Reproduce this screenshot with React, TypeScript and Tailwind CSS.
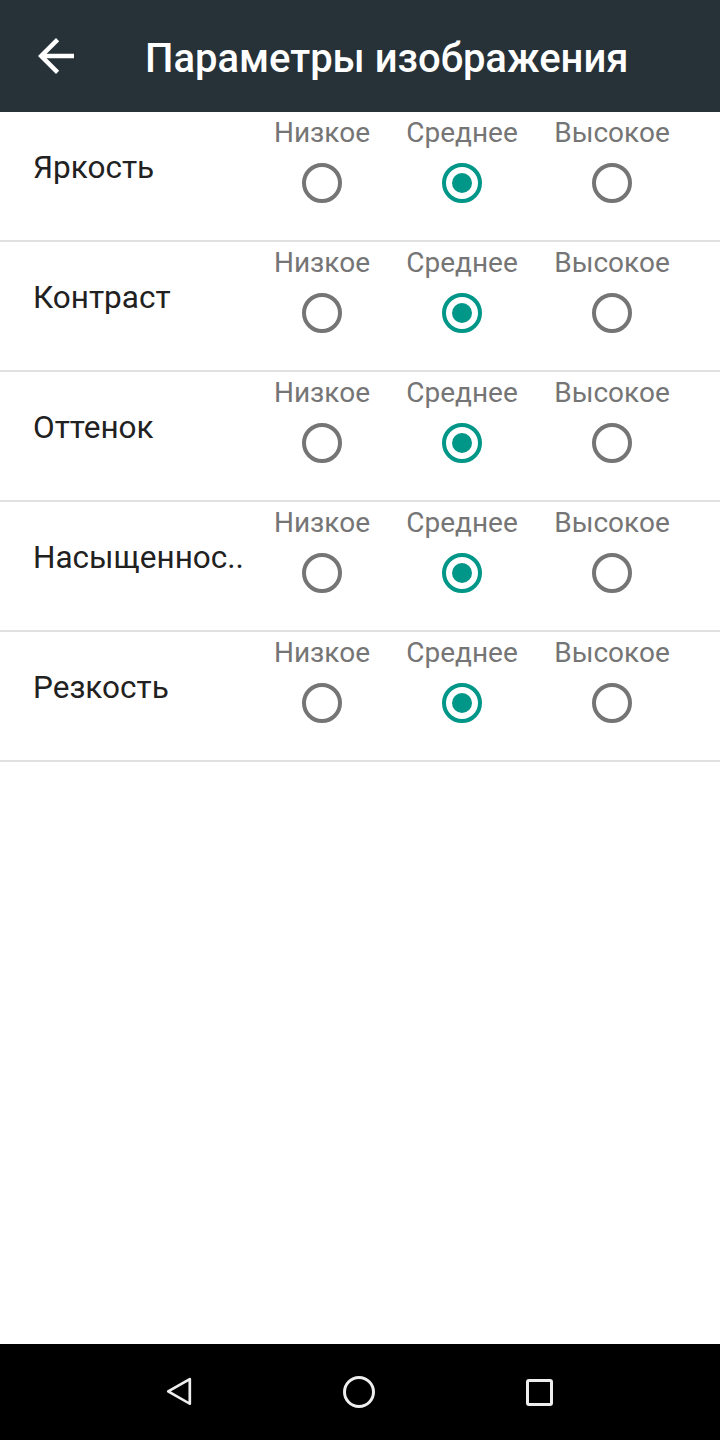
import { useState } from 'react';

const levels = ['Низкое', 'Среднее', 'Высокое'];
const colWidths = ['w-[140px]', 'w-[140px]', 'w-[160px]'];

const params = [
  { id: 'brightness', name: 'Яркость' },
  { id: 'contrast', name: 'Контраст' },
  { id: 'hue', name: 'Оттенок' },
  { id: 'saturation', name: 'Насыщеннос..' },
  { id: 'sharpness', name: 'Резкость' },
];

function Radio({ checked, onClick }: { checked: boolean; onClick: () => void }) {
  return (
    <button
      onClick={onClick}
      className={`flex items-center justify-center w-[40px] h-[40px] rounded-full border-4 ${
        checked ? 'border-[#009688]' : 'border-[#757575]'
      }`}
    >
      {checked && <span className="block w-[20px] h-[20px] rounded-full bg-[#009688]" />}
    </button>
  );
}

export default function App() {
  const [values, setValues] = useState<Record<string, number>>({
    brightness: 1,
    contrast: 1,
    hue: 1,
    saturation: 1,
    sharpness: 1,
  });

  return (
    <div className="w-[720px] h-[1440px] flex flex-col bg-white" style={{ fontFamily: 'Roboto, "Noto Sans", sans-serif' }}>
      <header className="h-[112px] bg-[#263238] flex items-center shrink-0">
        <button className="w-[54px] h-[54px] ml-[29px] text-white">
          <svg viewBox="0 0 24 24" width="54" height="54" fill="currentColor">
            <path d="M20 11H7.83l5.59-5.59L12 4l-8 8 8 8 1.41-1.41L7.83 13H20v-2z" />
          </svg>
        </button>
        <h1 className="ml-[62px] mt-[6px] text-white text-[40px] font-medium leading-none">
          Параметры изображения
        </h1>
      </header>

      <main className="flex-1">
        {params.map((p) => (
          <div key={p.id} className="h-[130px] border-b-2 border-[#e0e0e0] flex items-start">
            <div className="w-[252px] pl-[33px] pt-[37px] text-[31.5px] leading-[38px] text-[#212121] whitespace-nowrap">
              {p.name}
            </div>
            {levels.map((level, i) => (
              <div key={level} className={`${colWidths[i]} flex flex-col items-center pt-[6px]`}>
                <span className="text-[28px] leading-[30px] text-[#757575]">{level}</span>
                <div className="mt-[15px]">
                  <Radio
                    checked={values[p.id] === i}
                    onClick={() => setValues({ ...values, [p.id]: i })}
                  />
                </div>
              </div>
            ))}
          </div>
        ))}
      </main>

      <nav className="h-[96px] bg-black shrink-0 flex items-center">
        <div className="w-full flex items-center">
          <div className="ml-[162px] w-[36px] h-[36px] flex items-center justify-center">
            <svg viewBox="0 0 36 36" width="36" height="36" fill="none" stroke="#eeeeee" strokeWidth="3" strokeLinejoin="round">
              <path d="M30 3 L6 17.5 L30 32 Z" transform="translate(-1 0) scale(0.9 0.85) translate(2 3)" />
            </svg>
          </div>
          <div className="ml-[145px] w-[32px] h-[32px] rounded-full border-[3px] border-[#eeeeee]" />
          <div className="ml-[151px] w-[27px] h-[27px] rounded-[3px] border-[3px] border-[#eeeeee]" />
        </div>
      </nav>
    </div>
  );
}
